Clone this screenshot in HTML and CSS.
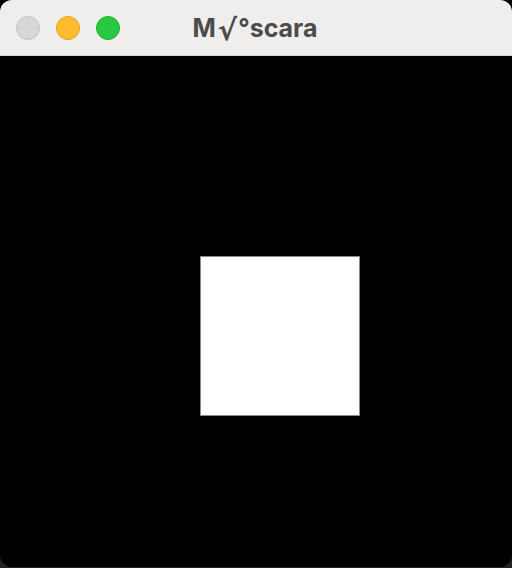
FILE: index.html
```html
<!DOCTYPE html>
<html>
<head>
<meta charset="utf-8">
<link rel="stylesheet" href="styles.css">
</head>
<body>
<div class="window">
  <div class="titlebar">
    <div class="lights">
      <span class="light close"></span>
      <span class="light min"></span>
      <span class="light max"></span>
    </div>
    <div class="title">M<span class="root">√</span>°scara</div>
  </div>
  <div class="canvas">
    <div class="square"></div>
  </div>
</div>
</body>
</html>
```
FILE: styles.css
```css
html, body {
  margin: 0;
  padding: 0;
  width: 512px;
  height: 568px;
  background: linear-gradient(#000 0 50%, #222 50% 100%);
  overflow: hidden;
}
.window {
  width: 512px;
  height: 567px;
  border-radius: 12px;
  overflow: hidden;
  display: flex;
  flex-direction: column;
  background: #000;
  box-shadow: inset 1px 0 0 #3a3a3a, inset -1px 0 0 #3a3a3a;
}
.titlebar {
  height: 55px;
  flex: 0 0 55px;
  background: #efeeed;
  border-bottom: 1px solid #d4d4d4;
  position: relative;
  display: flex;
  align-items: center;
  justify-content: center;
}
.lights {
  position: absolute;
  left: 16px;
  top: 16px;
  display: flex;
  gap: 16px;
}
.light {
  width: 24px;
  height: 24px;
  border-radius: 50%;
  box-sizing: border-box;
}
.close { background: #d9d8d7; border: 1px solid #c3c2c1; }
.min { background: #febc2e; border: 1px solid #e0a125; }
.max { background: #28c840; border: 1px solid #1fae32; }
.title {
  font-family: "Inter", "Liberation Sans", sans-serif;
  font-weight: 700;
  font-size: 25px;
  line-height: 30px;
  color: #4b4b4b;
  margin-left: -2px;
}
.root {
  font-family: "DejaVu Sans", sans-serif;
  font-weight: 700;
  font-size: 29px;
  line-height: 0;
  vertical-align: -3px;
  margin: 0 1px 0 2px;
}
.canvas {
  flex: 1;
  background: #000;
  padding-top: 200px;
  padding-left: 200px;
}
.square {
  width: 158px;
  height: 158px;
  background: #fff;
  border: 1px solid #8a8a8a;
}
```
